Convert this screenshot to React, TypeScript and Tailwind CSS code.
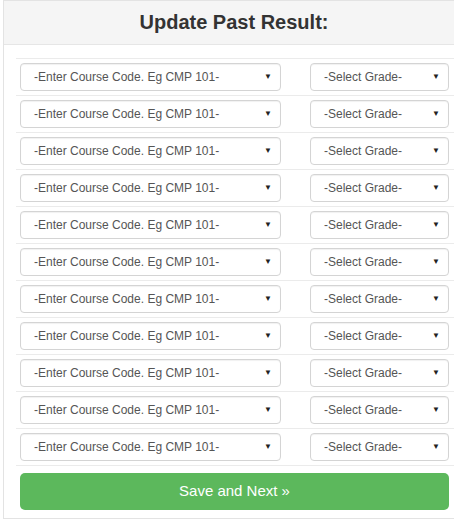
import React from "react";

const ROWS = 11;

function CaretSelect({ label, width }: { label: string; width: string }) {
  return (
    <div
      className={`${width} h-[28px] flex items-center justify-between rounded-[4px] border border-[#d4d4d4] bg-white pl-[13px] pr-[8px] shadow-[inset_0_1px_1px_rgba(0,0,0,0.06)]`}
    >
      <span className="text-[12px] text-[#555]">{label}</span>
      <span className="text-[8px] text-[#222] leading-none">▼</span>
    </div>
  );
}

export default function App() {
  return (
    <div
      className="w-[462px] ml-[3px] h-[519px] border border-[#e3e3e3] bg-white overflow-hidden"
      style={{ fontFamily: '"Liberation Sans", Arial, sans-serif' }}
    >
      {/* Panel heading */}
      <div className="h-[44px] bg-[#f5f5f5] border-b border-[#e6e6e6] flex items-center justify-center">
        <h2 className="text-[20px] font-bold text-[#333] pb-[2px]">Update Past Result:</h2>
      </div>

      <div className="pl-[12px] pt-[13px]">
        {Array.from({ length: ROWS }).map((_, i) => (
          <div key={i} className="flex border-t border-[#ebebeb] pl-[4px] py-[4px]">
            <CaretSelect label="-Enter Course Code. Eg CMP 101-" width="w-[261px]" />
            <div className="w-[29px]" />
            <CaretSelect label="-Select Grade-" width="w-[139px]" />
          </div>
        ))}
        <div className="border-t border-[#ebebeb] pt-[7px] pl-[4px]">
          <button className="w-[429px] h-[37px] rounded-[5px] bg-[#5cb85c] text-white text-[15px]">
            Save and Next »
          </button>
        </div>
      </div>
    </div>
  );
}
